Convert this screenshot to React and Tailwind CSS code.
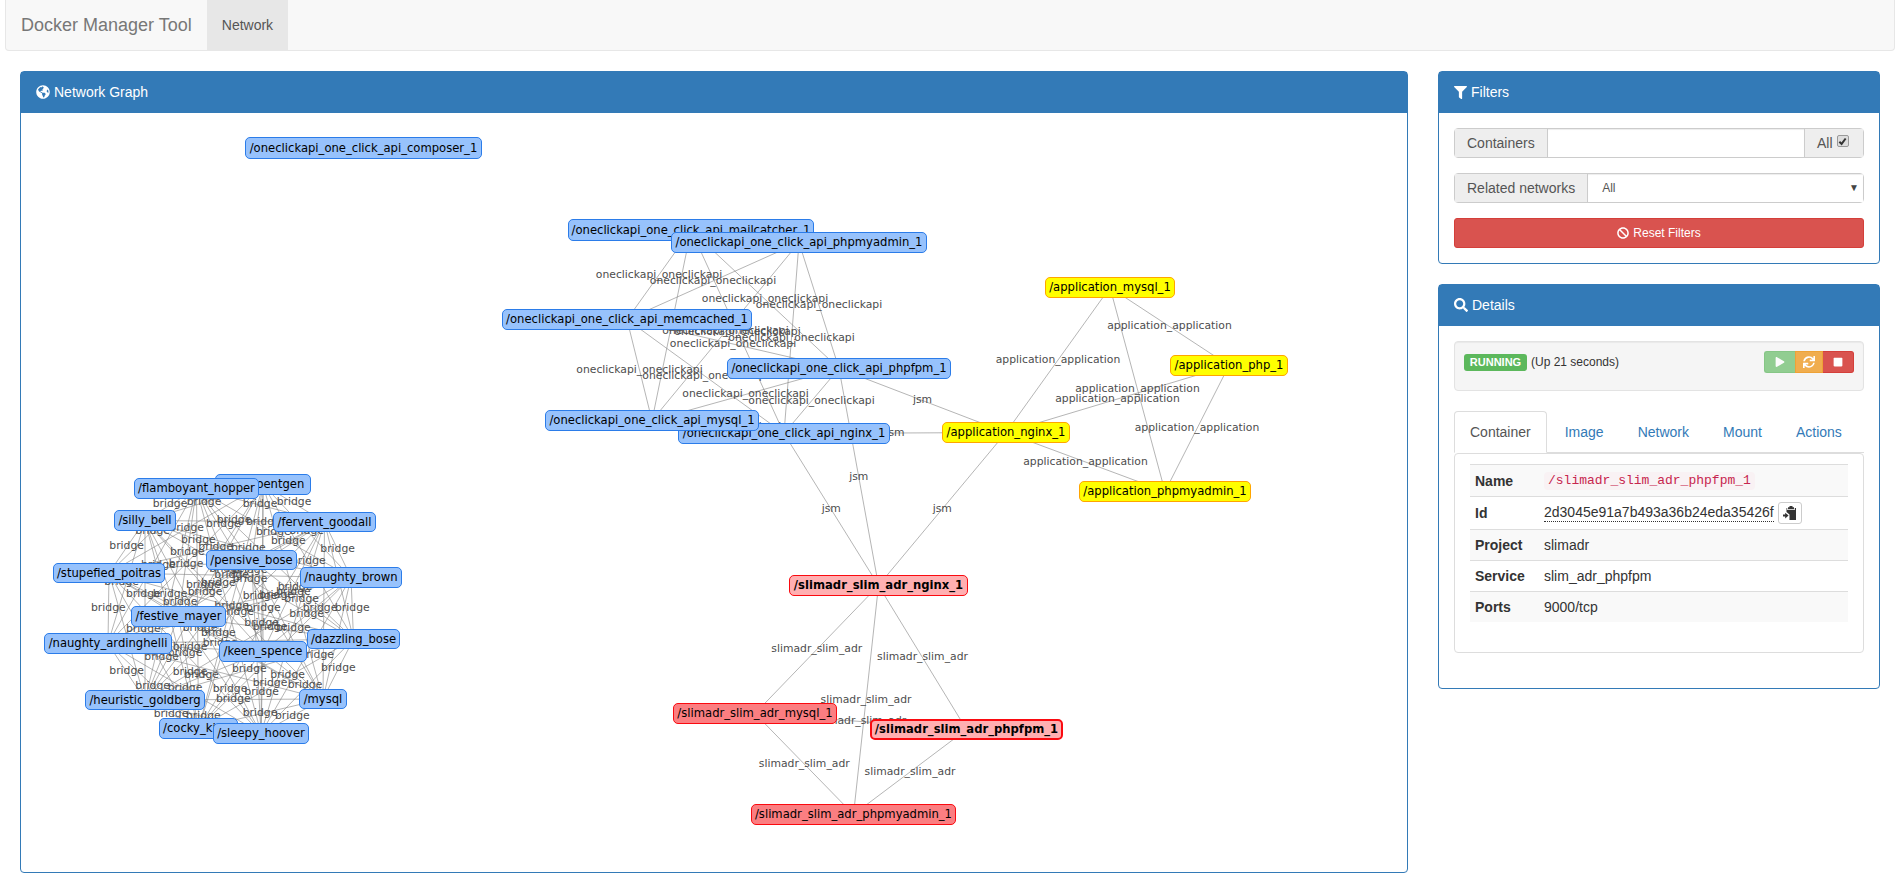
import React from "react";
import { FaGlobeAmericas, FaFilter, FaSearch, FaBan, FaPlay, FaSync, FaStop } from "react-icons/fa";

const N = {
  mail: ["/oneclickapi_one_click_api_mailcatcher_1", 568, 814, 219, 241, "b"],
  opma: ["/oneclickapi_one_click_api_phpmyadmin_1", 671, 927, 232, 253, "b"],
  mem: ["/oneclickapi_one_click_api_memcached_1", 502, 752, 309, 330, "b"],
  ofpm: ["/oneclickapi_one_click_api_phpfpm_1", 727, 951, 358, 379, "b"],
  ong: ["/oneclickapi_one_click_api_nginx_1", 678, 890, 423, 444, "b"],
  omy: ["/oneclickapi_one_click_api_mysql_1", 545, 759, 410, 431, "b"],
  comp: ["/oneclickapi_one_click_api_composer_1", 245, 482, 137, 159, "b"],
  amy: ["/application_mysql_1", 1045, 1175, 277, 298, "y"],
  aph: ["/application_php_1", 1170, 1288, 355, 376, "y"],
  ang: ["/application_nginx_1", 942, 1070, 422, 443, "y"],
  apm: ["/application_phpmyadmin_1", 1079, 1251, 481, 502, "y"],
  sng: ["/slimadr_slim_adr_nginx_1", 789, 968, 575, 596, "h"],
  smy: ["/slimadr_slim_adr_mysql_1", 673, 837, 703, 724, "r"],
  sfp: ["/slimadr_slim_adr_phpfpm_1", 870, 1063, 719, 740, "s"],
  spm: ["/slimadr_slim_adr_phpmyadmin_1", 751, 956, 804, 825, "r"],
  b1: ["/sad_roentgen", 215, 311, 474, 495, "b"],
  b2: ["/flamboyant_hopper", 134, 259, 478, 499, "b"],
  b3: ["/silly_bell", 114, 176, 510, 531, "b"],
  b4: ["/fervent_goodall", 273, 376, 512, 532, "b"],
  b5: ["/pensive_bose", 206, 297, 550, 570, "b"],
  b6: ["/stupefied_poitras", 53, 165, 563, 583, "b"],
  b7: ["/naughty_brown", 300, 402, 567, 588, "b"],
  b8: ["/festive_mayer", 131, 226, 606, 627, "b"],
  b9: ["/dazzling_bose", 307, 400, 629, 649, "b"],
  b10: ["/naughty_ardinghelli", 44, 172, 633, 654, "b"],
  b11: ["/keen_spence", 219, 307, 641, 662, "b"],
  b12: ["/heuristic_goldberg", 85, 205, 690, 710, "b"],
  b13: ["/mysql", 299, 347, 689, 709, "b"],
  b14: ["/cocky_kirch", 159, 238, 718, 739, "b"],
  b15: ["/sleepy_hoover", 213, 309, 723, 744, "b"],
};
const clique = (keys, label) => {
  const out = [];
  keys.forEach((a, i) => keys.slice(i + 1).forEach((b) => out.push([a, b, label])));
  return out;
};
const bridgeKeys = ["b1","b2","b3","b4","b5","b6","b7","b8","b9","b10","b11","b12","b13","b14","b15"];
const LABELLED = [
  ...clique(["mail", "opma", "mem", "ofpm", "omy", "ong"], "oneclickapi_oneclickapi"),
  ...clique(["amy", "aph", "ang", "apm"], "application_application"),
  ...clique(["sng", "smy", "sfp", "spm"], "slimadr_slim_adr"),
  ["ong", "ang", "jsm"], ["ofpm", "ang", "jsm"], ["ong", "sng", "jsm"], ["ofpm", "sng", "jsm"], ["ang", "sng", "jsm"],
];
const BRIDGE = clique(bridgeKeys, "bridge");
const EDGES = [...LABELLED, ...BRIDGE];
// Places of the "bridge" edge labels inside the dense cluster (3x crop coordinates, see conversion below).
const BRIDGE_LABELS = [
  [420,132],[522,127],[690,132],[792,127],[612,180],[580,192],[700,187],[368,213],[470,205],[730,216],[830,212],
  [505,240],[775,242],[290,259],[923,268],[472,277],[557,262],[655,265],[835,303],[468,313],[385,315],[590,328],
  [660,330],[605,345],[660,358],[520,375],[565,370],[795,380],[275,367],[340,403],[420,403],[525,397],[690,407],
  [790,395],[815,418],[740,405],[450,425],[235,445],[605,437],[700,445],[870,445],[967,445],[830,463],[340,508],
  [695,490],[720,500],[790,505],[620,455],[510,505],[565,520],[480,560],[465,578],[395,592],[570,550],[290,634],
  [480,637],[515,645],[658,628],[773,645],[925,625],[860,585],[368,678],[465,685],[720,670],[825,675],[600,688],
  [695,695],[610,718],[423,763],[520,768],[690,760],[787,768],
].map(([x, y]) => [30 + x / 3, 460 + y / 3]);

const ORIGIN_X = 21, ORIGIN_Y = 113;
const cx = (k) => (N[k][1] + N[k][2]) / 2 - ORIGIN_X;
const cy = (k) => (N[k][3] + N[k][4]) / 2 - ORIGIN_Y;
const KIND = {
  b: "bg-[#97c2fc] border-[#2b7ce9] border",
  y: "bg-[#ffff00] border-[#ffa500] border",
  r: "bg-[#fb7e81] border-[#fa0a10] border",
  h: "bg-[#ffafb1] border-[#fa0a10] border font-bold",
  s: "bg-[#ffafb1] border-[#fa0a10] border-2 font-bold",
};
const LABEL = "absolute -translate-x-1/2 -translate-y-1/2 whitespace-nowrap text-[10.8px] leading-none text-[#4d4d4d]";

function Graph() {
  return (
    <div className="relative h-[759px] overflow-hidden font-['DejaVu_Sans',sans-serif]">
      <svg className="absolute inset-0 w-full h-full" fill="none">
        {EDGES.map(([a, b], i) => (
          <line key={i} x1={cx(a)} y1={cy(a)} x2={cx(b)} y2={cy(b)} stroke="#848484" strokeOpacity="0.6" strokeWidth="1" />
        ))}
      </svg>
      {LABELLED.map(([a, b, l], i) => (
        <span key={i} className={LABEL} style={{ left: (cx(a) + cx(b)) / 2, top: (cy(a) + cy(b)) / 2 - 0.25 }}>
          {l}
        </span>
      ))}
      {BRIDGE_LABELS.map(([x, y], i) => (
        <span key={i} className={LABEL} style={{ left: x - ORIGIN_X, top: y - ORIGIN_Y }}>
          bridge
        </span>
      ))}
      {Object.entries(N).map(([k, [t, x1, x2, y1, y2, kind]]) => (
        <div
          key={k}
          className={`absolute box-border flex items-center justify-center whitespace-nowrap rounded-[5px] pt-[1px] text-[11.6px] leading-none text-black ${KIND[kind]}`}
          style={{ left: x1 - ORIGIN_X, top: y1 - ORIGIN_Y, width: x2 - x1, height: y2 - y1 }}
        >
          {t}
        </div>
      ))}
    </div>
  );
}

function Panel({ icon, title, children, className = "" }) {
  return (
    <div className={`rounded border border-[#337ab7] bg-white ${className}`}>
      <div className="flex h-[41px] items-center gap-[4px] bg-[#337ab7] px-[15px] pb-[1px] text-[14px] text-white">
        {icon}
        <span>{title}</span>
      </div>
      {children}
    </div>
  );
}

function PasteIcon() {
  return (
    <svg width="13" height="14" viewBox="0 0 13 14" fill="#333">
      <path d="M6.5 0h3v1.2H11v2H5V1.2h1.5z" />
      <path d="M3.5 2H4.2v2h7.6V2h1.2v12H6.5V8.6L3.5 6z" />
      <path d="M0 8.6h2.2V6.8L5.6 9.6l-3.4 2.8v-1.8H0z" />
    </svg>
  );
}

const ROWS = [
  ["Project", "slimadr"],
  ["Service", "slim_adr_phpfpm"],
  ["Ports", "9000/tcp"],
];

export default function App() {
  return (
    <div className="min-h-[889px] bg-white pl-[5px] pr-[6px] font-['Liberation_Sans',Arial,sans-serif] text-[14px] leading-[20px] text-[#333]">
      <nav className="flex h-[51px] rounded-b border border-t-0 border-[#e7e7e7] bg-[#f8f8f8]">
        <a className="px-[15px] py-[15px] text-[18px] leading-[20px] text-[#777]">Docker Manager Tool</a>
        <a className="flex items-center bg-[#e7e7e7] px-[15px] text-[#555]">Network</a>
      </nav>
      <div className="mt-[20px] flex">
        <div className="w-[1418px] shrink-0 px-[15px]">
          <Panel title="Network Graph" icon={<FaGlobeAmericas className="size-[14px]" />}>
            <Graph />
          </Panel>
        </div>
        <div className="min-w-0 flex-1 px-[15px]">
          <Panel title="Filters" className="mb-[20px]" icon={<FaFilter className="size-[13px]" />}>
            <div className="p-[15px]">
              <div className="mb-[15px] flex h-[30px] rounded border border-[#ccc]">
                <span className="flex items-center border-r border-[#ccc] bg-[#eee] px-[12px] text-[#555]">Containers</span>
                <div className="min-w-0 flex-1 bg-white shadow-[inset_0_1px_1px_rgba(0,0,0,0.075)]" />
                <span className="flex w-[59px] items-center gap-[4px] border-l border-[#ccc] bg-[#eee] pl-[12px] text-[#555]">
                  All
                  <span className="relative -top-[2px] flex size-[12px] items-center justify-center rounded-[2px] border border-[#999] bg-[#ddd]">
                    <svg width="9" height="9" viewBox="0 0 10 10" fill="none" stroke="#333" strokeWidth="2.2"><path d="M1.5 5.2l2.5 2.5 4.5-6" /></svg>
                  </span>
                </span>
              </div>
              <div className="mb-[15px] flex h-[30px] rounded border border-[#ccc]">
                <span className="flex items-center border-r border-[#ccc] bg-[#eee] px-[12px] text-[#555]">Related networks</span>
                <div className="flex min-w-0 flex-1 items-center justify-between bg-white pl-[14px] pr-[4px] text-[12px] text-[#555] shadow-[inset_0_1px_1px_rgba(0,0,0,0.075)]">
                  <span>All</span>
                  <span className="text-[10px] text-[#444]">▼</span>
                </div>
              </div>
              <button className="flex h-[30px] w-full items-center justify-center gap-[4px] rounded-[3px] border border-[#d43f3a] bg-[#d9534f] text-[12px] text-white">
                <FaBan className="size-[12px]" />
                Reset Filters
              </button>
            </div>
          </Panel>
          <Panel title="Details" icon={<FaSearch className="size-[14px]" />}>
            <div className="p-[15px] pb-[35px]">
              <div className="mb-[20px] flex h-[50px] items-center justify-between rounded border border-[#e3e3e3] bg-[#f5f5f5] px-[9px] pb-[8px] shadow-[inset_0_1px_1px_rgba(0,0,0,0.05)]">
                <div className="flex items-center gap-[4px] text-[12px]">
                  <span className="flex h-[17px] w-[63px] items-center justify-center rounded-[3px] bg-[#5cb85c] text-[11px] font-bold leading-none text-white">RUNNING</span>
                  <span>(Up 21 seconds)</span>
                </div>
                <div className="flex h-[22px] text-white">
                  <span className="flex w-[31px] items-center justify-center rounded-l-[3px] border border-[#4cae4c] border-r-0 bg-[#5cb85c] opacity-65"><FaPlay className="size-[10px]" /></span>
                  <span className="flex w-[28px] items-center justify-center border border-[#eea236] bg-[#f0ad4e]"><FaSync className="size-[12px]" /></span>
                  <span className="flex w-[31px] items-center justify-center rounded-r-[3px] border border-[#d43f3a] border-l-0 bg-[#d9534f]"><FaStop className="size-[10px]" /></span>
                </div>
              </div>
              <div className="flex h-[42px] border-b border-[#ddd]">
                <a className="-mb-px flex h-[42px] items-center rounded-t border border-[#ddd] border-b-white bg-white px-[15px] text-[#555]">Container</a>
                {["Image", "Network", "Mount", "Actions"].map((t) => (
                  <a key={t} className="ml-[2px] flex items-center border border-transparent px-[15px] text-[#337ab7]">{t}</a>
                ))}
              </div>
              <div className="h-[200px] rounded border border-[#ddd] bg-white px-[15px] pt-[10px]">
                <div className="flex h-[32px] items-center border-t border-[#ddd] bg-[#f9f9f9] px-[5px]">
                  <b className="w-[69px]">Name</b>
                  <code className="rounded bg-[#f9f2f4] px-[4px] py-[2px] font-['Liberation_Mono',monospace] text-[13px] leading-[14px] text-[#c7254e]">/slimadr_slim_adr_phpfpm_1</code>
                </div>
                <div className="flex h-[33px] items-center border-t border-[#ddd] px-[5px]">
                  <b className="w-[69px]">Id</b>
                  <span className="border-b border-dotted border-[#333] leading-[17px]">2d3045e91a7b493a36b24eda35426f</span>
                  <span className="ml-[4px] flex h-[22px] w-[24px] items-center justify-center rounded-[3px] border border-[#ccc] bg-white"><PasteIcon /></span>
                </div>
                {ROWS.map(([k, v], i) => (
                  <div key={k} className={`flex h-[31px] items-center border-t border-[#ddd] px-[5px] ${i % 2 === 0 ? "bg-[#f9f9f9]" : ""}`}>
                    <b className="w-[69px]">{k}</b>
                    <span>{v}</span>
                  </div>
                ))}
              </div>
            </div>
          </Panel>
        </div>
      </div>
    </div>
  );
}
